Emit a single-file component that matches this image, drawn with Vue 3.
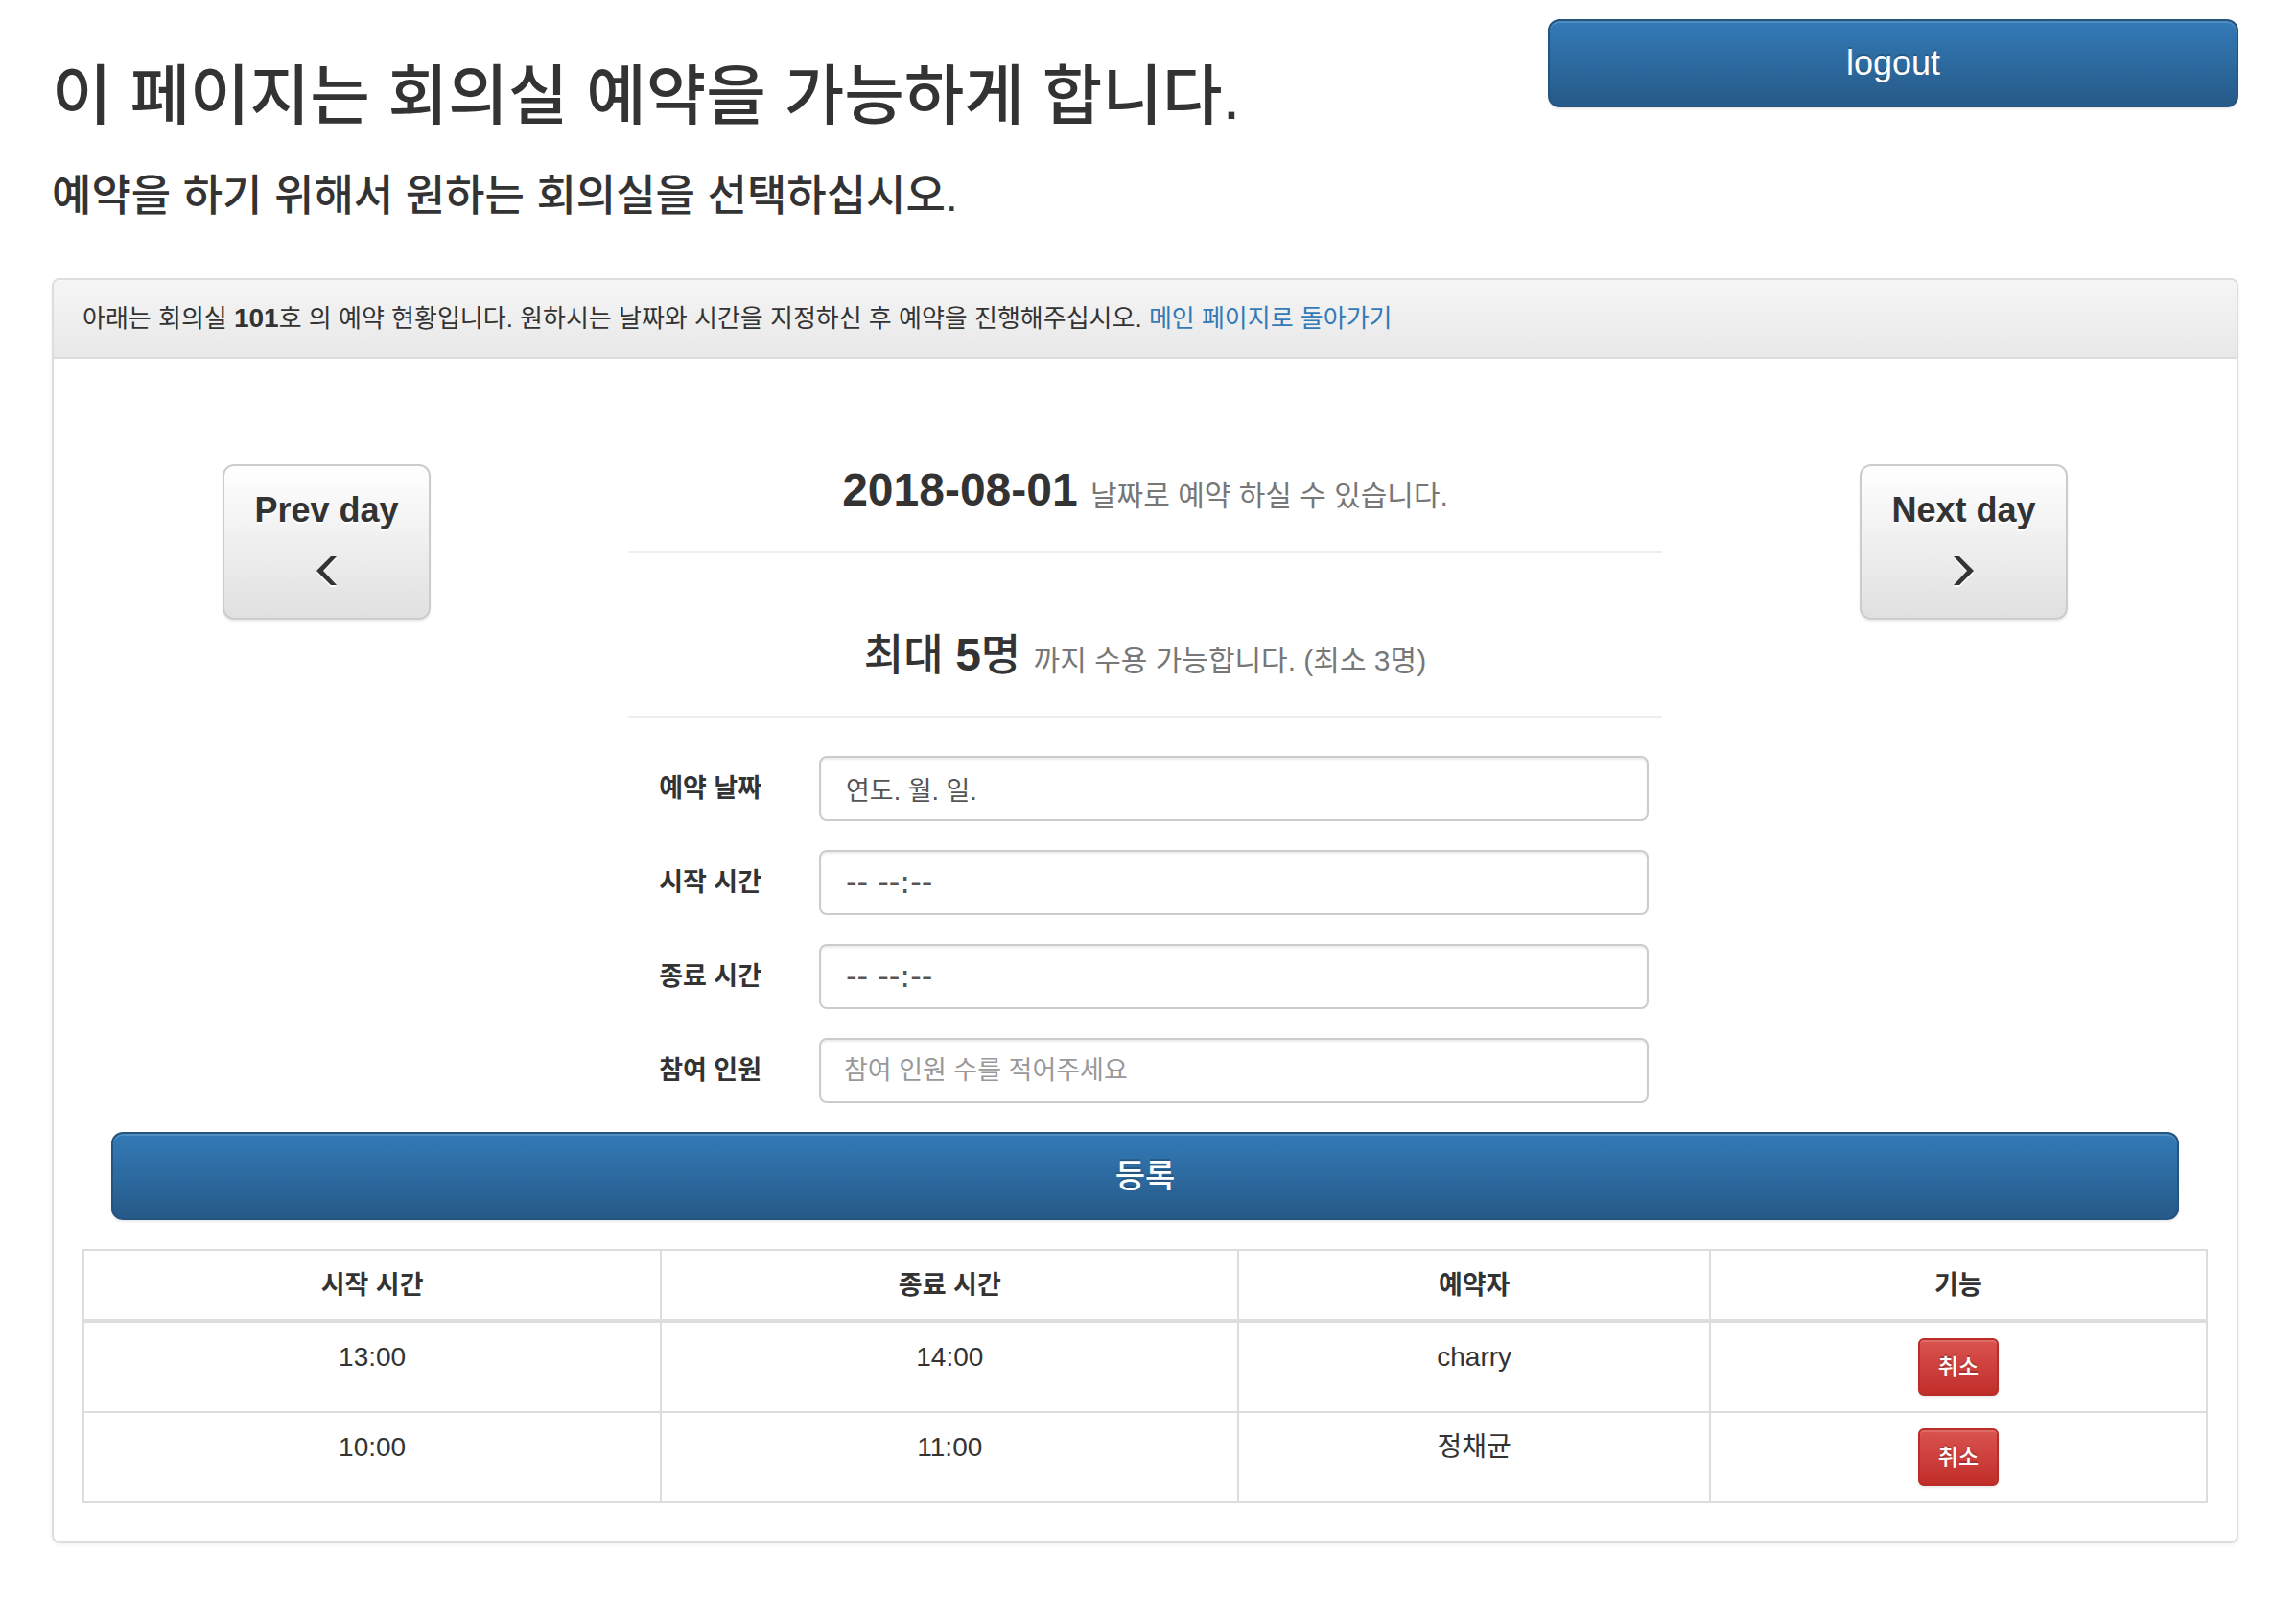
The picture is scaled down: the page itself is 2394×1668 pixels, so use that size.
<script setup>
import { ref } from 'vue'

const fields = ref([
  { id: 'date', label: '예약 날짜', value: '연도. 월. 일.', placeholder: '', kind: 'picker' },
  { id: 'start', label: '시작 시간', value: '-- --:--', placeholder: '', kind: 'picker time' },
  { id: 'end', label: '종료 시간', value: '-- --:--', placeholder: '', kind: 'picker time' },
  { id: 'people', label: '참여 인원', value: '', placeholder: '참여 인원 수를 적어주세요', kind: '' },
])

const bookings = [
  { start: '13:00', end: '14:00', name: 'charry' },
  { start: '10:00', end: '11:00', name: '정채균' },
]
</script>

<template>
  <div class="page">
    <header class="top">
      <div class="titles">
        <h1>이 페이지는 회의실 예약을 가능하게 합니다.</h1>
        <h2>예약을 하기 위해서 원하는 회의실을 선택하십시오.</h2>
      </div>
      <button type="button" class="btn primary logout">logout</button>
    </header>

    <main class="panel">
      <div class="panel-heading">
        아래는 회의실 <strong>101</strong>호 의 예약 현황입니다. 원하시는 날짜와 시간을 지정하신 후 예약을 진행해주십시오.
        <a href="#">메인 페이지로 돌아가기</a>
      </div>

      <div class="panel-body">
        <form @submit.prevent>
          <div class="booking">
            <div class="side prev">
              <button type="button" class="btn day">
                Prev day
                <svg viewBox="0 0 21 30" width="21" height="30" aria-hidden="true"><path d="M15 0h6L7 15l14 15h-6L0 15z" /></svg>
              </button>
            </div>

            <div class="middle">
              <h3 class="page-header"><strong>2018-08-01</strong> <small>날짜로 예약 하실 수 있습니다.</small></h3>
              <h3 class="page-header"><span class="korean">최대 </span><strong>5</strong><span class="korean">명</span> <small>까지 수용 가능합니다. (최소 3명)</small></h3>
              <div class="fields">
                <div v-for="f in fields" :key="f.id" class="field">
                  <label :for="f.id">{{ f.label }}</label>
                  <input :id="f.id" v-model="f.value" type="text" :class="f.kind" :placeholder="f.placeholder">
                </div>
              </div>
            </div>

            <div class="side next">
              <button type="button" class="btn day">
                Next day
                <svg viewBox="0 0 21 30" width="21" height="30" aria-hidden="true"><path d="M6 0H0l14 15L0 30h6l15-15z" /></svg>
              </button>
            </div>
          </div>
          <div class="submit">
            <button type="submit" class="btn primary register">등록</button>
          </div>
        </form>

        <table>
          <colgroup>
            <col class="c-time"><col class="c-time"><col class="c-name"><col>
          </colgroup>
          <thead>
            <tr><th>시작 시간</th><th>종료 시간</th><th>예약자</th><th>기능</th></tr>
          </thead>
          <tbody>
            <tr v-for="b in bookings" :key="b.start">
              <td>{{ b.start }}</td>
              <td>{{ b.end }}</td>
              <td>{{ b.name }}</td>
              <td><button type="button" class="btn danger">취소</button></td>
            </tr>
          </tbody>
        </table>
      </div>
    </main>
  </div>
</template>

<style>
body {
  margin: 0;
  background: #fff;
}
</style>

<style scoped>
* {
  box-sizing: border-box;
}
.page {
  padding: 20px 60px 56px 54px;
  font-family: "Liberation Sans", "Noto Sans CJK KR", sans-serif;
  font-size: 27px;
  line-height: 40px;
  color: #333;
}
button,
input {
  font-family: inherit;
}
.top {
  display: flex;
  justify-content: space-between;
  align-items: flex-start;
  height: 270px;
}
.titles {
  padding-top: 40px;
}
h1,
h2,
h3 {
  margin: 0;
  font-weight: 500;
}
h1 {
  font-size: 68px;
  line-height: 80px;
}
h2 {
  margin-top: 38px;
  font-size: 45px;
  line-height: 54px;
}
.btn {
  display: block;
  border: 2px solid;
  border-radius: 12px;
  font-size: 36px;
  line-height: 48px;
  cursor: pointer;
}
.primary {
  height: 92px;
  color: #fff;
  border-color: #245580;
  background: linear-gradient(#337ab7, #265a88);
  text-shadow: 0 -2px 0 rgba(0, 0, 0, 0.2);
  box-shadow: inset 0 2px 0 rgba(255, 255, 255, 0.15), 0 2px 2px rgba(0, 0, 0, 0.075);
}
.logout {
  width: calc((100% + 60px) / 3 - 60px);
}
.panel {
  border: 2px solid #ddd;
  border-radius: 8px;
  box-shadow: 0 2px 4px rgba(0, 0, 0, 0.05);
}
.panel-heading {
  padding: 20px 30px;
  border-bottom: 2px solid #ddd;
  border-radius: 6px 6px 0 0;
  background: linear-gradient(#f5f5f5, #e8e8e8);
  font-size: 26px;
}
.panel-heading strong {
  font-size: 28px;
  line-height: 28px;
}
a {
  color: #337ab7;
  text-decoration: none;
}
.panel-body {
  padding: 110px 30px 40px;
}
.booking {
  display: grid;
  grid-template-columns: 1fr 2fr 1fr;
  padding: 0 30px;
}
.side {
  display: flex;
  justify-content: center;
  align-items: flex-start;
}
.prev {
  padding-right: 90px;
}
.next {
  padding-left: 90px;
}
.day {
  padding: 22px 31px 14px;
  color: #333;
  font-weight: 700;
  border-color: #ccc;
  background: linear-gradient(#fff, #e0e0e0);
  text-shadow: 0 2px 0 #fff;
  box-shadow: inset 0 2px 0 rgba(255, 255, 255, 0.15), 0 2px 2px rgba(0, 0, 0, 0.075);
}
.day svg {
  display: block;
  margin: 24px auto 20px;
  fill: #333;
  filter: drop-shadow(0 2px 0 #fff);
}
.page-header {
  height: 92px;
  border-bottom: 2px solid #eee;
  font-size: 48px;
  line-height: 54px;
  text-align: center;
}
.page-header + .page-header {
  margin-top: 80px;
}
.korean {
  font-size: 45px;
}
small {
  font-size: 30px;
  font-weight: 400;
  color: #777;
}
.fields {
  margin: 40px -16px 0;
}
.field {
  display: grid;
  grid-template-columns: 1fr 5fr;
  align-items: center;
  margin-bottom: 30px;
}
label {
  padding-right: 30px;
  text-align: right;
  font-weight: 700;
}
input {
  height: 68px;
  margin: 0 30px;
  padding: 12px 24px;
  border: 2px solid #ccc;
  border-radius: 8px;
  background: #fff;
  font-size: 27px;
  line-height: 40px;
  color: #555;
  box-shadow: inset 0 2px 2px rgba(0, 0, 0, 0.075);
}
input.picker {
  padding-left: 26px;
}
input.time {
  font-family: "DejaVu Sans", sans-serif;
  font-size: 32px;
}
input::placeholder {
  color: #999;
  opacity: 1;
}
.submit {
  padding: 0 30px 30px;
}
.register {
  width: 100%;
  font-size: 34px;
  font-weight: 500;
}
table {
  width: 100%;
  table-layout: fixed;
  border-collapse: collapse;
}
.c-time {
  width: 27.2%;
}
.c-name {
  width: 22.2%;
}
th,
td {
  padding: 16px;
  border: 2px solid #ddd;
  text-align: center;
  vertical-align: top;
}
th {
  padding-bottom: 15px;
  border-bottom-width: 4px;
}
td {
  font-size: 28px;
}
.danger {
  margin: 0 auto;
  padding: 8px 19px;
  color: #fff;
  font-size: 23px;
  font-weight: 500;
  line-height: 40px;
  border-color: #b92c28;
  border-radius: 6px;
  background: linear-gradient(#d9534f, #c12e2a);
  text-shadow: 0 -2px 0 rgba(0, 0, 0, 0.2);
  box-shadow: inset 0 2px 0 rgba(255, 255, 255, 0.15), 0 2px 2px rgba(0, 0, 0, 0.075);
}
</style>
